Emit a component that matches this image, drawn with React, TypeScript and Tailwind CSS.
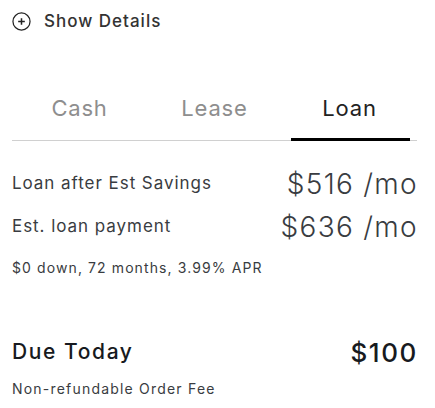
import { useState } from 'react';

const tabs = ['Cash', 'Lease', 'Loan'];

export default function App() {
  const [active, setActive] = useState('Loan');

  return (
    <div className="w-[435px] h-[408px] bg-white text-[#393c41] pl-3 pr-[18px] font-['Inter',sans-serif]">
      <button className="flex items-center gap-[13px] h-10 pt-[3px]">
        <svg width="19" height="19" viewBox="0 0 20 20" fill="none" stroke="#222" strokeWidth="1.3">
          <circle cx="10" cy="10" r="9" />
          <path d="M10 6.5v7M6.5 10h7" strokeWidth="1.6" />
        </svg>
        <span className="text-[17px] font-medium tracking-[1px] text-[#333]">Show Details</span>
      </button>

      <div className="mt-[52px] grid grid-cols-3 border-b border-[#d0d0d0]">
        {tabs.map((t) => (
          <button
            key={t}
            onClick={() => setActive(t)}
            className={`relative pt-[3px] pb-[18px] leading-[27px] text-[22px] tracking-[0.8px] ${active === t ? 'text-[#222]' : 'text-[#8e8e8e]'}`}
          >
            {t}
            {active === t && <span className="absolute left-[9px] right-[7px] -bottom-[1px] h-[3px] bg-black" />}
          </button>
        ))}
      </div>

      <div className="mt-[26px] flex justify-between items-center h-[34px]">
        <span className="text-[17px] tracking-[0.95px]">Loan after Est Savings</span>
        <span className="text-[28px] font-light tracking-[1.3px] -mr-[1px]">$516 /mo</span>
      </div>
      <div className="mt-[9px] flex justify-between items-center h-[34px]">
        <span className="text-[17px] tracking-[0.95px]">Est. loan payment</span>
        <span className="text-[28px] font-light tracking-[1.3px] -mr-[1px]">$636 /mo</span>
      </div>
      <p className="mt-[14px] text-[14px] leading-[20px] tracking-[1.1px]">$0 down, 72 months, 3.99% APR</p>

      <div className="mt-[59px] flex justify-between items-center h-[30px] text-[#171a20]">
        <span className="text-[21px] font-medium tracking-[1.6px]">Due Today</span>
        <span className="text-[26px] font-medium tracking-[1.6px] -mr-[1px]">$100</span>
      </div>
      <p className="mt-[12px] text-[14px] leading-[20px] tracking-[1.2px]">Non-refundable Order Fee</p>
    </div>
  );
}
